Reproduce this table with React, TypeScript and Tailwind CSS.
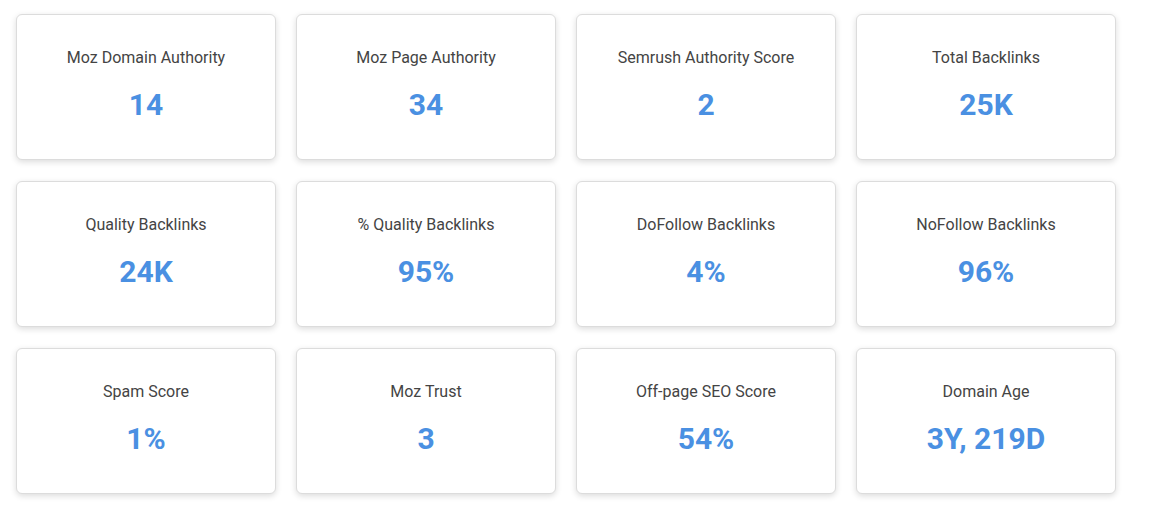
import React from "react";

const items: [string, string][] = [
  ["Moz Domain Authority", "14"],
  ["Moz Page Authority", "34"],
  ["Semrush Authority Score", "2"],
  ["Total Backlinks", "25K"],
  ["Quality Backlinks", "24K"],
  ["% Quality Backlinks", "95%"],
  ["DoFollow Backlinks", "4%"],
  ["NoFollow Backlinks", "96%"],
  ["Spam Score", "1%"],
  ["Moz Trust", "3"],
  ["Off-page SEO Score", "54%"],
  ["Domain Age", "3Y, 219D"],
];

export default function App() {
  return (
    <div className="min-h-[505px] bg-white pl-4 pt-[14px] font-['Roboto',sans-serif]">
      <div className="grid w-[1100px] grid-cols-[repeat(4,260px)] gap-x-5 gap-y-[21px]">
        {items.map(([label, value]) => (
          <div
            key={label}
            className="flex h-[146px] flex-col items-center rounded-md border border-[#dcdcdc] bg-white shadow-[0_2px_6px_rgba(0,0,0,0.14)]"
          >
            <div className="mt-[32px] text-[16px] leading-[22px] text-[#444]">{label}</div>
            <div className="mt-[18px] text-[30px] font-bold leading-[36px] text-[#4a90e2]">{value}</div>
          </div>
        ))}
      </div>
    </div>
  );
}
